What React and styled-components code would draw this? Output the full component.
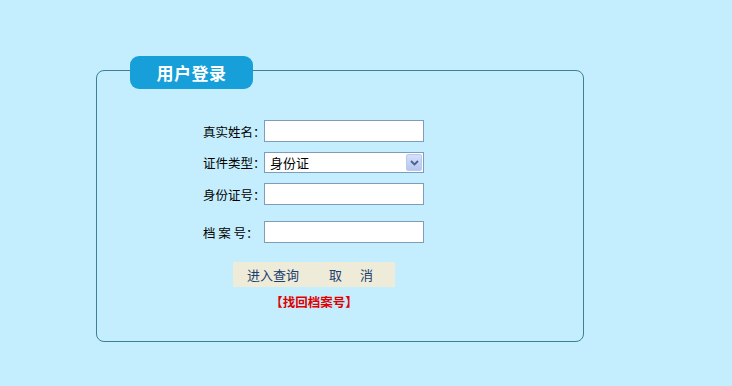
import React from "react";
import styled, { createGlobalStyle } from "styled-components";

const Global = createGlobalStyle`
  html, body { margin: 0; padding: 0; background: #c4eefd; }
  body { font-family: "Noto Sans CJK SC", "Liberation Sans", sans-serif; font-size: 12px; color: #000; }
`;

const Page = styled.div`
  padding: 70px 0 0 96px;
  width: 732px;
  height: 386px;
  box-sizing: border-box;
`;

const Box = styled.section`
  position: relative;
  width: 488px;
  height: 272px;
  box-sizing: border-box;
  border: 1px solid #3e7f97;
  border-radius: 8px;
`;

const Tab = styled.h2`
  position: absolute;
  top: -15px;
  left: 33px;
  margin: 0;
  width: 123px;
  height: 33px;
  border-radius: 9px;
  background: #169fd8;
  color: #fff;
  font-size: 17px;
  font-weight: bold;
  line-height: 33px;
  text-align: center;
  letter-spacing: 0.5px;
`;

const Form = styled.div`
  margin: 49px 0 0 106px;
  width: 221px;
  display: flex;
  flex-direction: column;
`;

const Row = styled.div`
  display: grid;
  grid-template-columns: 61px 160px;
  align-items: center;
  margin-top: ${(p) => p.$space || 0}px;
`;

const Label = styled.label`
  font-size: 12.5px;
  white-space: pre;
  text-align: left;
`;

const Input = styled.input`
  box-sizing: border-box;
  width: 160px;
  height: 22px;
  margin: 0;
  border: 1px solid #7f9db9;
  background: #fff;
  outline: none;
`;

const SelectWrap = styled.div`
  position: relative;
  width: 160px;
  height: 21px;
  box-sizing: border-box;
  border: 1px solid #7f9db9;
  background: #fff;
`;

const SelectText = styled.div`
  padding-left: 5px;
  font-size: 13px;
  line-height: 19px;
`;

const DropButton = styled.div`
  position: absolute;
  top: 1px;
  right: 1px;
  width: 16px;
  height: 17px;
  box-sizing: border-box;
  border: 1px solid #b8c9f2;
  border-radius: 2px;
  background: linear-gradient(#d6e0fa, #b5c6f0);
  display: flex;
  align-items: center;
  justify-content: center;
`;

const ButtonBar = styled.div`
  margin: 19px 0 0 30px;
  width: 162px;
  height: 25px;
  background: #eeebd9;
  display: flex;
  align-items: center;
`;

const Button = styled.button`
  border: 0;
  background: transparent;
  padding: 0;
  margin-left: ${(p) => p.$left}px;
  color: #1a406f;
  font-family: inherit;
  font-size: 13px;
  line-height: 17px;
  letter-spacing: ${(p) => p.$spread || 0}px;
  cursor: pointer;
`;

const Link = styled.a`
  margin-top: 6px;
  align-self: center;
  margin-left: 1px;
  color: #e00000;
  font-weight: bold;
  font-size: 12.5px;
  text-decoration: none;
  line-height: 17px;
`;

export default function App() {
  return (
    <Page>
      <Global />
      <Box>
        <Tab>用户登录</Tab>
        <Form>
          <Row>
            <Label>真实姓名：</Label>
            <Input />
          </Row>
          <Row $space={10}>
            <Label>证件类型：</Label>
            <SelectWrap>
              <SelectText>身份证</SelectText>
              <DropButton>
                <svg width="9" height="6" viewBox="0 0 9 6">
                  <path d="M1 1 L4.5 4.5 L8 1" fill="none" stroke="#4d6185" strokeWidth="1.8" />
                </svg>
              </DropButton>
            </SelectWrap>
          </Row>
          <Row $space={10}>
            <Label>身份证号：</Label>
            <Input />
          </Row>
          <Row $space={16}>
            <Label>{"档 案 号："}</Label>
            <Input />
          </Row>
          <ButtonBar>
            <Button $left={14}>进入查询</Button>
            <Button $left={30} $spread={18}>取消</Button>
          </ButtonBar>
          <Link href="#">【找回档案号】</Link>
        </Form>
      </Box>
    </Page>
  );
}
